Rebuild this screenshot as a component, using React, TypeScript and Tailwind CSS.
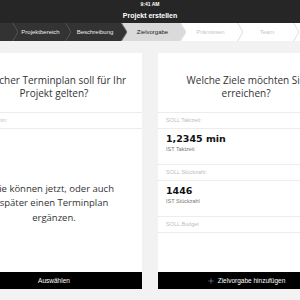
import { Plus } from 'lucide-react'
import { clsx } from 'clsx'

type Tone = 'done' | 'active' | 'todo'

const crumbs: { label: string; w: string; tone: Tone }[] = [
  { label: '', w: 'w-[57px]', tone: 'done' },
  { label: 'Projektbereich', w: 'w-[53px]', tone: 'done' },
  { label: 'Beschreibung', w: 'w-[56px]', tone: 'done' },
  { label: 'Zielvorgabe', w: 'w-[59px]', tone: 'active' },
  { label: 'Prämissen', w: 'w-[57px]', tone: 'todo' },
  { label: 'Team', w: 'w-[56px]', tone: 'todo' },
  { label: '', w: 'w-[57px]', tone: 'todo' },
]

const toneFill: Record<Tone, string> = { done: '#333333', active: '#dadada', todo: '#ffffff' }
const toneLine: Record<Tone, string> = { done: '#5c5c5c', active: '#dadada', todo: '#d4d4d4' }

function Crumb({ label, w, tone }: { label: string; w: string; tone: Tone }) {
  return (
    <div
      className={clsx(
        'relative h-full shrink-0 flex items-center justify-center pl-[4px] text-[6px]',
        w,
        tone === 'done' && 'bg-[#333333] text-[#ececec]',
        tone === 'active' && 'bg-[#dadada] text-[#222]',
        tone === 'todo' && 'bg-white text-[#c6c6c6]',
      )}
    >
      {label}
      <svg
        className="absolute top-0 right-[-6px] z-10 h-full w-[6px]"
        viewBox="0 0 6 18"
        preserveAspectRatio="none"
      >
        <polygon points="0,0 6,9 0,18" fill={toneFill[tone]} />
        <polyline
          points="0,-1 6,9 0,19"
          fill="none"
          stroke={toneLine[tone]}
          strokeWidth="0.8"
          vectorEffect="non-scaling-stroke"
        />
      </svg>
    </div>
  )
}

function LabelRow({ text }: { text: string }) {
  return (
    <div className="flex h-[16px] items-center border-b border-[#ececec] px-[8px] text-[5.5px] text-[#bdbdbd]">
      {text}
    </div>
  )
}

function ValueBlock({ value, sub }: { value: string; sub: string }) {
  return (
    <div className="h-[36px] border-b border-[#ececec] px-[8px] pt-[4px]">
      <div className="font-['DejaVu_Sans',sans-serif] text-[9.5px] font-bold leading-[12px] text-[#111]">
        {value}
      </div>
      <div className="text-[5.5px] leading-[8px] text-[#777]">{sub}</div>
    </div>
  )
}

export default function App() {
  return (
    <div className="flex h-[300px] w-[300px] flex-col overflow-hidden bg-[#f2f2f2] font-['Liberation_Sans',Arial,sans-serif]">
      <div className="flex h-[23px] flex-col items-center bg-[#262626] pt-[1px] text-white">
        <div className="text-[5px] font-semibold leading-[6px]">9:41 AM</div>
        <div className="mt-[4px] text-[7px] font-bold leading-[10px]">Projekt erstellen</div>
      </div>

      <div className="flex h-[18px] shrink-0 overflow-hidden">
        <div className="ml-[-45px] flex h-full">
          {crumbs.map((c, i) => (
            <Crumb key={i} {...c} />
          ))}
        </div>
      </div>

      <div className="flex-1 overflow-hidden pt-[12px]">
        <div className="ml-[-34px] flex gap-[16px]">
          <div className="flex h-[236px] w-[176px] shrink-0 flex-col bg-white">
            <div className="border-b border-[#ececec] pt-[21px] pb-[12px] text-center font-['Open_Sans',sans-serif] text-[10px] leading-[13px] text-[#333]">
              Welcher Terminplan soll für Ihr
              <br />
              Projekt gelten?
            </div>
            <LabelRow text="SOLL Termin:" />
            <div className="flex flex-1 items-center justify-center pt-[6px] text-center font-['Open_Sans',sans-serif] text-[9.5px] leading-[14.5px] text-[#333]">
              <p>
                Sie können jetzt, oder auch
                <br />
                später einen Terminplan
                <br />
                ergänzen.
              </p>
            </div>
            <button className="flex h-[17px] items-center justify-center bg-black text-[6.5px] text-white">
              Auswählen
            </button>
          </div>

          <div className="flex h-[236px] w-[176px] shrink-0 flex-col bg-white">
            <div className="border-b border-[#ececec] pt-[21px] pb-[12px] text-center font-['Open_Sans',sans-serif] text-[10px] leading-[13px] text-[#333]">
              Welche Ziele möchten Sie
              <br />
              erreichen?
            </div>
            <LabelRow text="SOLL Taktzeit:" />
            <ValueBlock value="1,2345 min" sub="IST Taktzeit" />
            <LabelRow text="SOLL Stückzahl:" />
            <ValueBlock value="1446" sub="IST Stückzahl" />
            <LabelRow text="SOLL Budget" />
            <div className="flex-1" />
            <button className="flex h-[17px] items-center justify-center gap-[3px] bg-black text-[6.5px] text-white">
              <Plus size={8} strokeWidth={1} />
              Zielvorgabe hinzufügen
            </button>
          </div>
        </div>
      </div>
    </div>
  )
}
